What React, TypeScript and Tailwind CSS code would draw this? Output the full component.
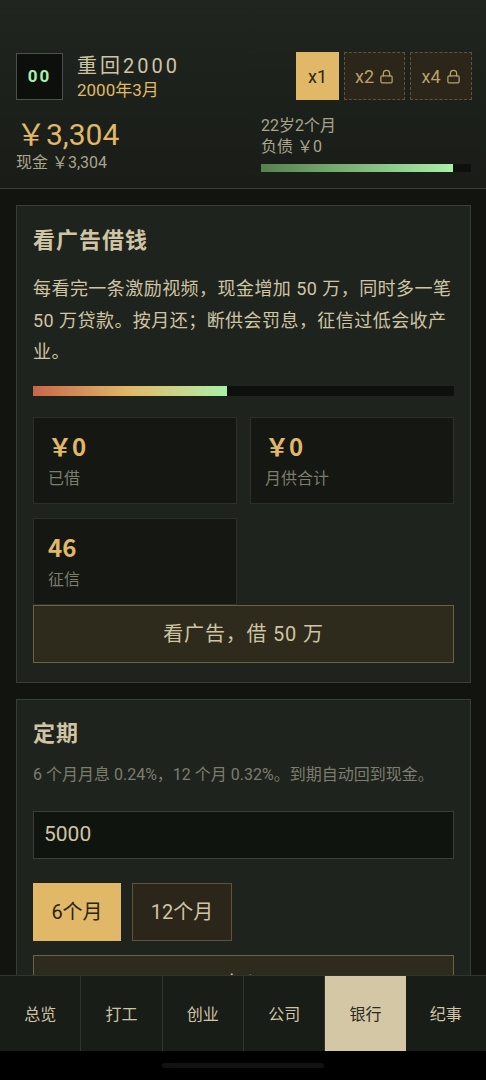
import { Lock } from "lucide-react";

const font = { fontFamily: '"Roboto", "Noto Sans CJK SC", sans-serif' };

function Stat({ value, label }: { value: string; label: string }) {
  return (
    <div className="h-[87px] border border-[#2b302a] bg-[#141712] pl-[14px] pt-[12px]">
      <div className="text-[24px] leading-[32px] font-bold text-[#e0b868]" style={{ fontFamily: '"Noto Sans CJK SC", sans-serif' }}>{value}</div>
      <div className="mt-[5px] text-[16px] leading-[24px] text-[#7d7d6c]">{label}</div>
    </div>
  );
}

function Tab({ label, active }: { label: string; active?: boolean }) {
  return (
    <div
      className={
        active
          ? "flex flex-1 items-center justify-center bg-[#d4c7a5] pt-[2px] text-[16px] text-[#2a2a1f]"
          : "flex flex-1 items-center justify-center border-r border-[#30352f] pt-[2px] text-[16px] text-[#cfc4a4] last:border-r-0"
      }
    >
      {label}
    </div>
  );
}

export default function App() {
  return (
    <div className="flex h-[1080px] w-[486px] flex-col overflow-hidden bg-[#12150f]" style={font}>
      <header className="h-[189px] shrink-0 border-b border-[#3a3f38] bg-gradient-to-b from-[#20251f] to-[#191c17] pl-[16px] pr-[14px] pt-[52px]">
        <div className="flex items-start justify-between">
          <div className="flex items-center">
            <div className="mt-px flex h-[47px] w-[47px] items-center justify-center border border-[#4a5249] bg-[#0c0f0b] text-[17px] font-bold tracking-[2px] text-[#a8f0a8]">
              00
            </div>
            <div className="ml-[14px]">
              <div className="text-[20px] leading-[26px] tracking-[3px] text-[#cfc4a4]">重回2000</div>
              <div className="mt-[1px] text-[17px] leading-[20px] text-[#e0b868]">2000年3月</div>
            </div>
          </div>
          <div className="flex gap-[5px]">
            <div className="flex h-[48px] w-[43px] items-center justify-center bg-[#e0b868] text-[18px] text-[#2a2412]">x1</div>
            <div className="flex h-[48px] w-[61px] items-center justify-center gap-[5px] border border-dashed border-[#5f5438] bg-[#2b2619] text-[18px] text-[#b8a269]">
              x2
              <Lock size={15} strokeWidth={2} />
            </div>
            <div className="flex h-[48px] w-[62px] items-center justify-center gap-[5px] border border-dashed border-[#5f5438] bg-[#2b2619] text-[18px] text-[#b8a269]">
              x4
              <Lock size={15} strokeWidth={2} />
            </div>
          </div>
        </div>
        <div className="mt-[17px] mr-px flex justify-between">
          <div>
            <div className="text-[30px] leading-[36px] text-[#e0b868]">￥3,304</div>
            <div className="mt-px text-[16px] leading-[18px] text-[#a8a48c]">现金 ￥3,304</div>
          </div>
          <div className="-mt-[2px] w-[210px]">
            <div className="text-[16px] leading-[21px] text-[#a8a48c]">22岁2个月</div>
            <div className="text-[16px] leading-[21px] text-[#a8a48c]">负债 ￥0</div>
            <div className="mt-[7px] h-[8px] bg-[#0d100c]">
              <div className="h-full w-[91.4%] bg-gradient-to-r from-[#57814f] to-[#a8f0a8]" />
            </div>
          </div>
        </div>
      </header>

      <main className="min-h-0 flex-1 overflow-hidden pl-[16px] pr-[15px] pt-[16px]">
        <section className="border border-[#3a3f35] bg-[#1f231e] px-[16px] pt-[17px] pb-[19px]">
          <h2 className="text-[22px] leading-[36px] font-bold tracking-[1px] text-[#cfc4a4]">看广告借钱</h2>
          <p className="mt-[14px] text-[18px] leading-[31.5px] tracking-[0.45px] text-[#cfc4a4]">
            每看完一条激励视频，现金增加 50 万，同时多一笔 50 万贷款。按月还；断供会罚息，征信过低会收产业。
          </p>
          <div className="mt-[18px] h-[10px] bg-[#0d100c]">
            <div className="h-full w-[46%] bg-gradient-to-r from-[#c8664a] via-[#e0b868] to-[#a8f0a8]" />
          </div>
          <div className="mt-[21px] grid grid-cols-2 gap-x-[13px] gap-y-[14px]">
            <Stat value="￥0" label="已借" />
            <Stat value="￥0" label="月供合计" />
            <Stat value="46" label="征信" />
          </div>
          <button className="block h-[58px] w-full border border-[#6b6242] bg-[#2e2a1c] text-[20px] tracking-[0.8px] text-[#cfc4a4]">
            看广告，借 50 万
          </button>
        </section>

        <section className="mt-[16px] border border-[#3a3f35] bg-[#1f231e] px-[16px] pt-[17px] pb-[20px]">
          <h2 className="text-[22px] leading-[34px] font-bold tracking-[1px] text-[#cfc4a4]">定期</h2>
          <p className="mt-[12px] text-[16px] leading-[24px] whitespace-nowrap text-[#7d7d6c]">
            6 个月月息 0.24%，12 个月 0.32%。到期自动回到现金。
          </p>
          <div className="mt-[24px] flex h-[48px] items-center border border-[#3a3f38] bg-[#10140f] px-[10px] text-[21px] text-[#cfc4a4]">
            5000
          </div>
          <div className="mt-[24px] flex gap-[10px]">
            <button className="h-[58px] w-[88px] bg-[#e0b868] text-[20px] text-[#2a2412]">6个月</button>
            <button className="ml-px h-[58px] w-[100px] border border-[#5f5438] bg-[#2b2619] text-[20px] text-[#cfc4a4]">12个月</button>
          </div>
          <button className="mt-[14px] block h-[58px] w-full border border-[#6b6242] bg-[#2e2a1c] text-[20px] text-[#cfc4a4]">
            存入
          </button>
        </section>
      </main>

      <nav className="flex h-[76px] shrink-0 border-t border-[#30352f] bg-[#191d18]">
        <Tab label="总览" />
        <Tab label="打工" />
        <Tab label="创业" />
        <Tab label="公司" />
        <Tab label="银行" active />
        <Tab label="纪事" />
      </nav>
      <div className="flex h-[29px] shrink-0 justify-center bg-black pt-[12px]">
        <div className="h-[5px] w-[162px] rounded-full bg-[#111311]" />
      </div>
    </div>
  );
}
